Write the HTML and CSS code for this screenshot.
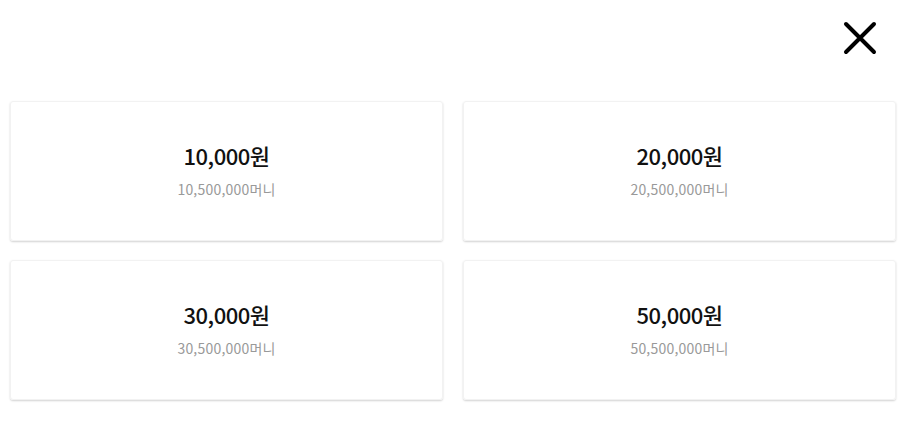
FILE: index.html
```html
<!DOCTYPE html>
<html lang="ko">
<head>
<meta charset="utf-8">
<link rel="stylesheet" href="styles.css">
</head>
<body>
<div class="page">
  <header class="top">
    <button class="close" aria-label="닫기">
      <svg width="36" height="36" viewBox="0 0 36 36"><path d="M4 4L32 32M32 4L4 32" stroke="#000" stroke-width="4" stroke-linecap="round" fill="none"/></svg>
    </button>
  </header>
  <main class="grid">
    <div class="card"><div class="amt">10,000원</div><div class="money">10,500,000머니</div></div>
    <div class="card"><div class="amt">20,000원</div><div class="money">20,500,000머니</div></div>
    <div class="card"><div class="amt">30,000원</div><div class="money">30,500,000머니</div></div>
    <div class="card"><div class="amt">50,000원</div><div class="money">50,500,000머니</div></div>
  </main>
</div>
</body>
</html>
```
FILE: styles.css
```css
html, body { margin: 0; padding: 0; background: #fff; }
body { font-family: "Noto Sans CJK KR", "Noto Sans", sans-serif; }
.page { width: 905px; height: 446px; box-sizing: border-box; padding: 0 9px 0 10px; }
.top { height: 101px; display: flex; justify-content: flex-end; align-items: flex-start; }
.close { margin-top: 20px; margin-right: 18px; padding: 0; border: 0; background: none; width: 36px; height: 36px; display: block; }
.close svg { display: block; }
.grid { display: grid; grid-template-columns: 1fr 1fr; column-gap: 20px; row-gap: 19px; }
.card { height: 140px; box-sizing: border-box; padding-bottom: 3px; border: 1px solid #f2f2f2; border-radius: 3px; box-shadow: 0 1px 2px rgba(0,0,0,0.18); display: flex; flex-direction: column; align-items: center; justify-content: center; }
.amt { font-size: 22px; font-weight: 500; color: #111; line-height: 28px; letter-spacing: -0.5px; }
.money { font-size: 14px; color: #999; line-height: 20px; margin-top: 10px; letter-spacing: 0.2px; }
```
